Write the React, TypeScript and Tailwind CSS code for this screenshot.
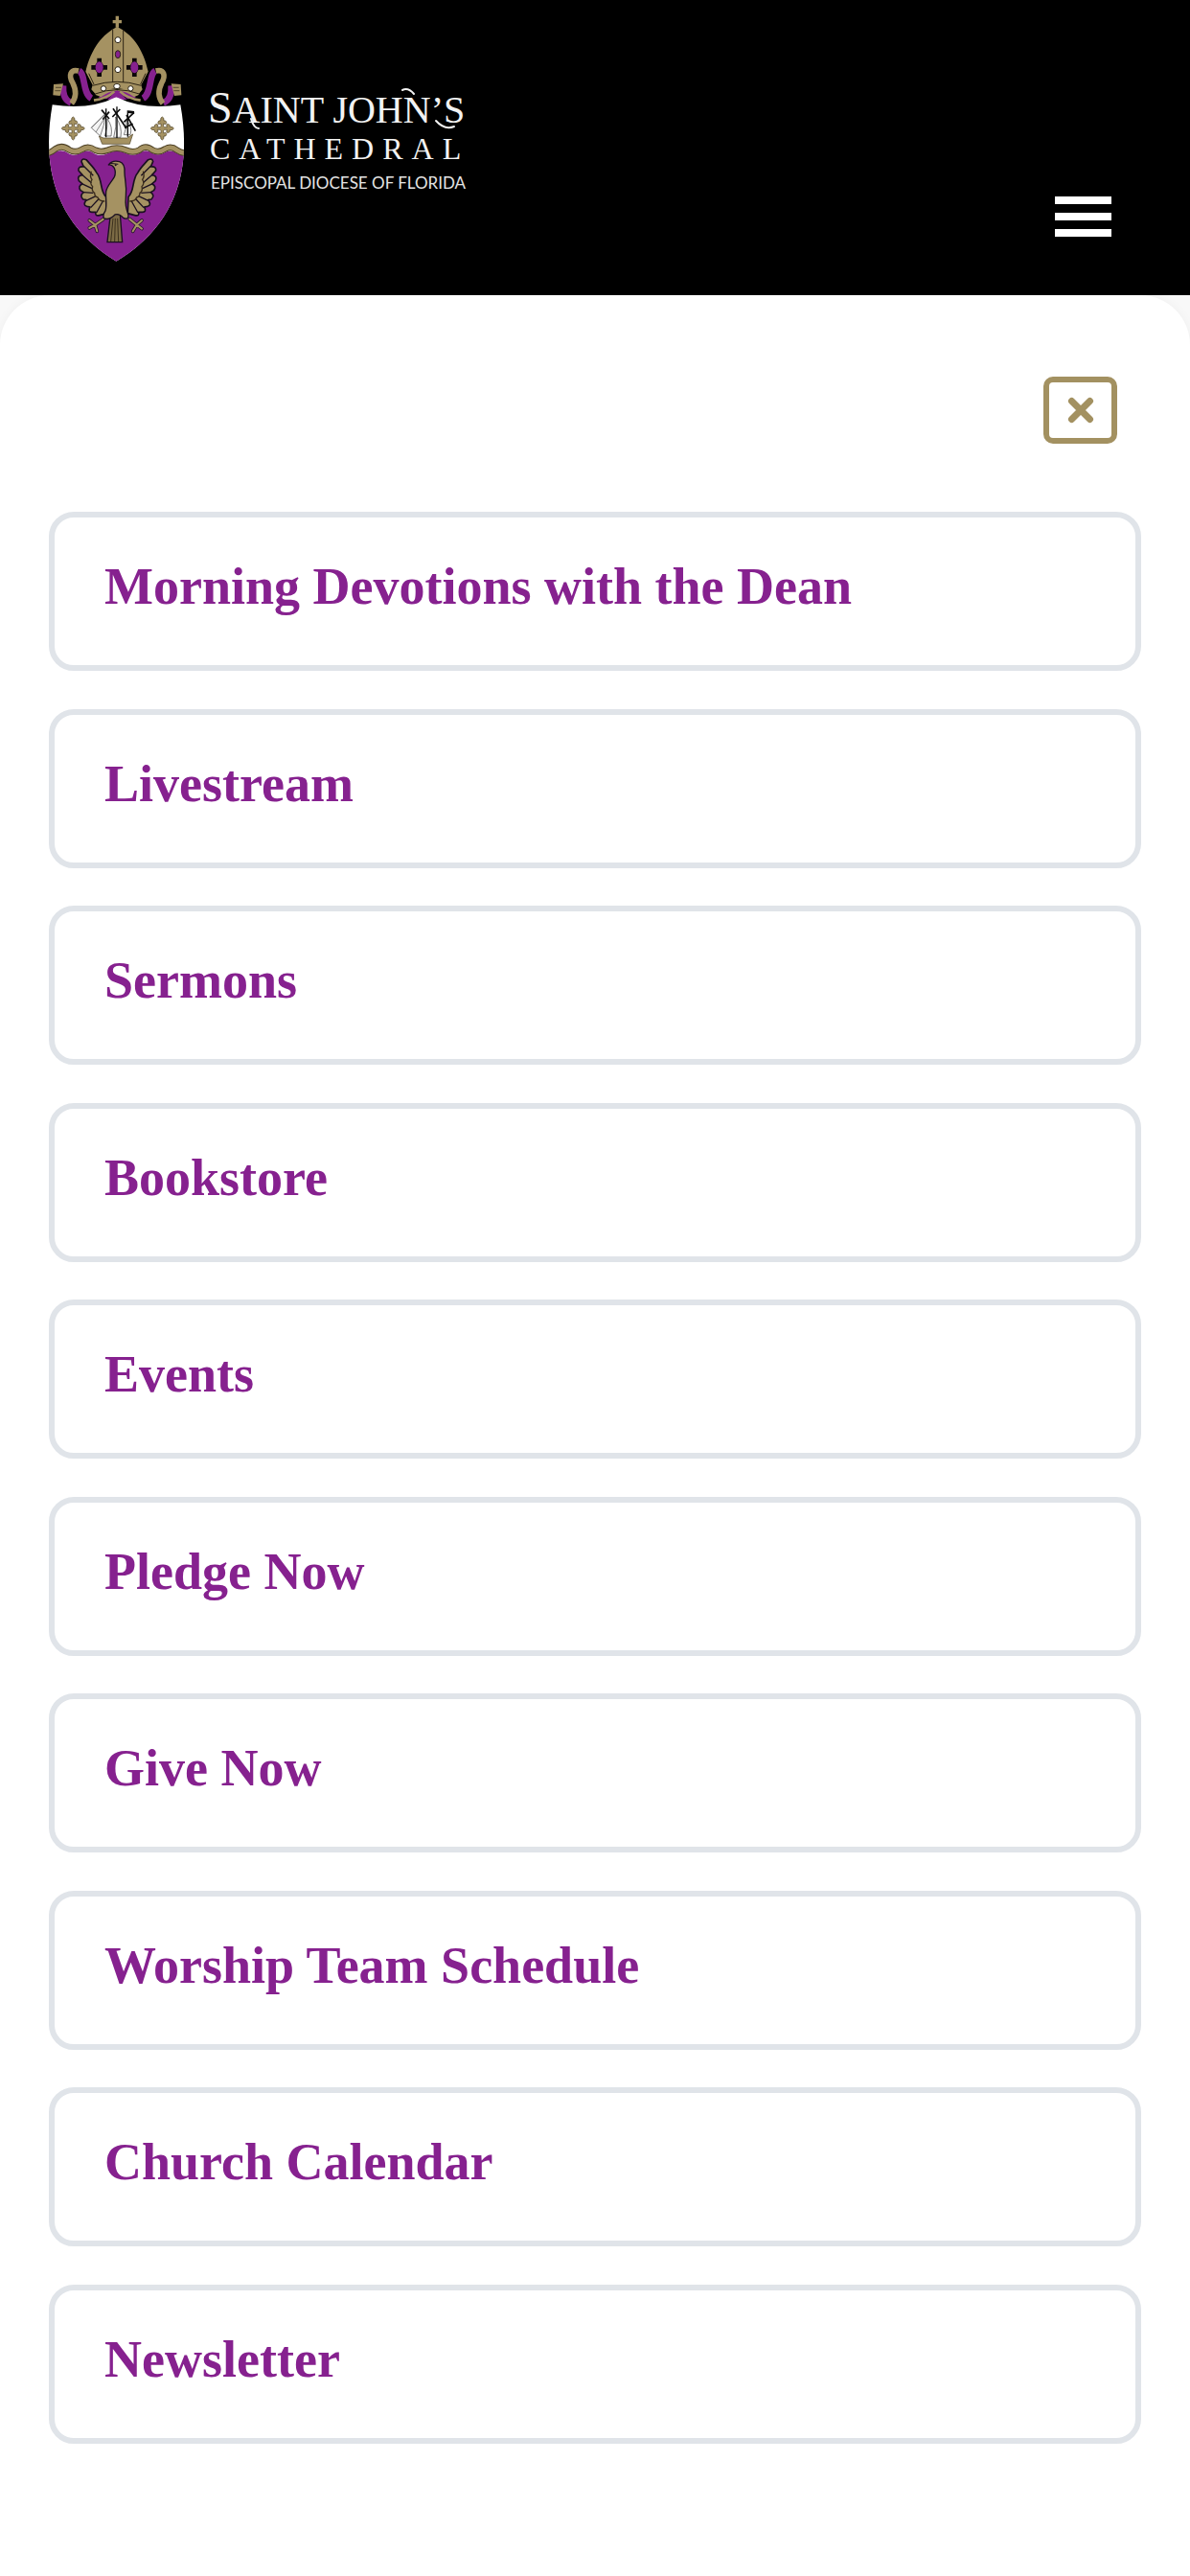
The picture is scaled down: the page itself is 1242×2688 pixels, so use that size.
import { useState } from 'react';

interface MenuLink {
  label: string;
  href: string;
}

const menuLinks: MenuLink[] = [
  { label: 'Morning Devotions with the Dean', href: '#devotions' },
  { label: 'Livestream', href: '#livestream' },
  { label: 'Sermons', href: '#sermons' },
  { label: 'Bookstore', href: '#bookstore' },
  { label: 'Events', href: '#events' },
  { label: 'Pledge Now', href: '#pledge' },
  { label: 'Give Now', href: '#give' },
  { label: 'Worship Team Schedule', href: '#worship-team' },
  { label: 'Church Calendar', href: '#calendar' },
  { label: 'Newsletter', href: '#newsletter' },
];

const GOLD = '#a59262';
const PURPLE = '#86218f';

function Mitre() {
  return (
    <g>
      {/* ribbons */}
      <g fill="none" strokeLinecap="butt" strokeLinejoin="round">
        <path d="M158 222 C178 232 168 292 196 308" stroke={PURPLE} strokeWidth="20" />
        <path d="M396 222 C376 232 386 292 358 308" stroke={PURPLE} strokeWidth="20" />
        <path d="M108 268 C106 300 116 316 132 322" stroke={PURPLE} strokeWidth="20" />
        <path d="M446 268 C448 300 438 316 422 322" stroke={PURPLE} strokeWidth="20" />
        <path d="M156 222 C130 216 124 236 138 260 C150 284 150 304 134 324" stroke={GOLD} strokeWidth="17" />
        <path d="M398 222 C424 216 430 236 416 260 C404 284 404 304 420 324" stroke={GOLD} strokeWidth="17" />
      </g>
      <path d="M78 264 L108 262 L98 300 L76 298 Z" fill={GOLD} />
      <path d="M476 264 L446 262 L456 300 L478 298 Z" fill={GOLD} />
      <path d="M84 274 H102 M82 284 H100 M470 274 H452 M472 284 H454" stroke="#2d2414" strokeWidth="2" />

      {/* cap */}
      <path
        d="M277 84 C232 106 196 150 178 224 L200 266 L196 280 L212 298 C256 270 298 270 342 298 L356 280 L352 266 L374 224 C358 150 322 106 277 84 Z"
        fill={GOLD}
      />
      <path d="M218 306 Q246 280 277 282 Q308 280 336 306 L310 310 Q290 294 277 292 Q264 294 244 310 Z" fill={PURPLE} />
      <path d="M208 296 Q250 268 277 282 Q304 268 346 296 L330 304 Q306 284 277 284 Q250 284 226 304 Z" fill={GOLD} />
      <path d="M277 282 L308 312 H246 Z" fill={PURPLE} />
      <path d="M204 314 Q246 308 268 286 M350 314 Q308 308 286 286" stroke={GOLD} strokeWidth="8" fill="none" />
      <g fill="none" stroke="#2d2414" strokeWidth="3">
        <path d="M263 92 V258 M296 94 V258" />
        <path d="M200 268 Q277 244 352 268" />
        <path d="M208 294 Q277 268 346 294" />
        <path d="M188 230 L204 264 M366 230 L350 264" />
      </g>
      <path d="M272 50 H282 V63 H291 V73 H282 V86 H272 V73 H263 V63 H272 Z" fill={GOLD} />

      {/* jewels */}
      <g stroke="#2d2414" strokeWidth="3">
        <circle cx="279" cy="125" r="9" fill="#fff" />
        <circle cx="279" cy="218" r="9" fill="#fff" />
        <ellipse cx="279" cy="170" rx="8" ry="12" fill={PURPLE} />
        <ellipse cx="276" cy="270" rx="10" ry="8" fill="#fff" />
        <circle cx="234" cy="277" r="8" fill="#fff" />
        <circle cx="319" cy="277" r="8" fill="#fff" />
      </g>
      <g fill="#0b0608">
        <path d="M214 182 H228 V194 L234 204 H246 V218 H234 L228 228 V240 H214 V228 L208 218 H196 V204 H208 L214 194 Z" />
        <path d="M324 182 H338 V194 L344 204 H356 V218 H344 L338 228 V240 H324 V228 L318 218 H306 V204 H318 L324 194 Z" />
      </g>
      <ellipse cx="221" cy="211" rx="12" ry="18" fill={PURPLE} />
      <ellipse cx="331" cy="211" rx="12" ry="18" fill={PURPLE} />
    </g>
  );
}

function BudCross({ x }: { x: number }) {
  return (
    <g transform={`translate(${x} 402)`} fill={GOLD} stroke="#4b3f24" strokeWidth="2">
      {[0, 90, 180, 270].map((angle) => (
        <path
          key={angle}
          transform={`rotate(${angle})`}
          d="M-4 0 L-4 -15 Q-15 -10 -13 -20 Q-11 -26 -5 -24 Q-6 -35 0 -36 Q6 -35 5 -24 Q11 -26 13 -20 Q15 -10 4 -15 L4 0 Z"
        />
      ))}
      <circle r="7" stroke="none" />
    </g>
  );
}

function Ship() {
  return (
    <g strokeLinejoin="round">
      <path d="M220 426 L234 432 H308 L326 420 L316 451 H230 Z" fill={GOLD} stroke="#4b3f24" strokeWidth="2" />
      <g fill="#f4f4f4" stroke="#444" strokeWidth="2">
        <path d="M240 356 L196 400 L224 426 Q238 392 240 356 Z" />
        <path d="M246 372 Q264 396 258 426 H238 Q248 398 246 372 Z" />
        <path d="M272 366 Q294 396 288 430 H266 Q276 396 272 366 Z" />
        <path d="M306 376 Q326 396 318 422 H298 Q308 396 306 376 Z" />
      </g>
      <g fill="none" stroke="#0c0c0c" strokeWidth="5">
        <path d="M242 340 V430 M276 334 V432 M310 346 V428" strokeWidth="4" />
        <path d="M228 344 L252 372 M232 374 L252 350 M264 340 L306 402 M262 366 L286 342 M298 382 L330 352 M306 360 L334 410 M300 400 L326 388" />
        <path d="M312 350 L330 352" strokeWidth="8" />
      </g>
      <path d="M196 400 L240 356 M210 414 L240 366" stroke="#555" strokeWidth="2" />
    </g>
  );
}

// One wing of the eagle; the other side is the same shape mirrored
function Wing() {
  return (
    <g>
      <path
        d="M242 616 C222 600 232 562 212 540 C204 524 192 514 180 500 Q166 494 165 506 L172 522 Q154 520 156 534 L168 548 Q150 550 157 566 L168 576 Q153 582 162 596 L172 602 Q158 612 170 624 L180 626 Q168 642 182 646 L192 648 Q184 664 198 664 L210 664 Q206 678 222 674 L244 668 Z"
        fill={GOLD}
        stroke="#1a1020"
        strokeWidth="5"
        strokeLinejoin="round"
      />
      <path
        d="M172 520 L202 550 M166 546 L196 572 M166 575 L198 590 M172 602 L202 604 M180 628 L210 614 M194 650 L220 622 M212 666 L232 630"
        stroke="#1a1020"
        strokeWidth="4"
        fill="none"
      />
      <path d="M196 536 Q190 552 198 562 Q190 574 200 584 Q196 598 206 604 Q206 616 216 618 Q220 630 238 630" stroke="#3a2c1c" strokeWidth="4" fill="none" />
    </g>
  );
}

function Eagle() {
  return (
    <g>
      <Wing />
      <g transform="matrix(-1 0 0 1 554 0)">
        <Wing />
      </g>
      {/* feet */}
      <g fill="none" stroke="#2a1630" strokeWidth="11" strokeLinecap="round">
        <path d="M234 686 L208 704 L190 690 M208 704 L190 714 M208 704 L214 724 M316 686 L338 704 L354 690 M338 704 L354 716 M338 704 L326 724" />
      </g>
      <g fill="none" stroke={GOLD} strokeWidth="6" strokeLinecap="round">
        <path d="M234 686 L208 704 L190 690 M208 704 L190 714 M208 704 L214 724 M316 686 L338 704 L354 690 M338 704 L354 716 M338 704 L326 724" />
      </g>
      {/* tail */}
      <path d="M256 670 L246 758 H293 L286 670 Z" fill="#7c6b45" stroke="#1a1020" strokeWidth="4" />
      <path d="M264 684 L257 756 M271 684 L269 756 M278 684 L281 756" stroke="#3a2f1c" strokeWidth="3" />
      {/* body */}
      <path
        d="M250 516 Q262 500 284 506 Q302 512 300 540 C300 560 308 580 304 616 C302 640 304 650 312 674 Q312 690 296 682 Q284 668 270 672 Q252 690 236 684 Q230 676 240 660 C246 640 240 624 242 600 C246 580 258 572 268 554 Q274 542 268 526 Q260 514 250 516 Z"
        fill={GOLD}
        stroke="#1a1020"
        strokeWidth="4"
        strokeLinejoin="round"
      />
      <path d="M254 511 L280 514" stroke="#1a1020" strokeWidth="3" />
      <circle cx="272" cy="517" r="3" fill="#1a1020" />
    </g>
  );
}

function CathedralLogo() {
  return (
    <svg viewBox="0 0 460 290" className="w-[460px] h-auto" role="img" aria-label="Saint John's Cathedral, Episcopal Diocese of Florida">
      <clipPath id="shield">
        <path d="M74 328 Q190 346 274 304 Q360 346 475 328 C510 520 470 700 274 818 C80 700 40 520 74 328 Z" />
      </clipPath>
      <g transform="scale(0.3333)">
        <Mitre />
        <g clipPath="url(#shield)">
          <rect x="40" y="290" width="470" height="540" fill="#fff" />
          <path
            d="M40 486 Q64 490 84 476 Q104 466 128 482 Q146 490 166 478 Q186 466 208 482 Q226 490 248 480 Q276 466 304 480 Q326 490 346 480 Q366 464 388 480 Q408 490 428 476 Q446 468 464 480 Q480 490 510 490 V830 H40 Z"
            fill={PURPLE}
          />
          <path
            d="M40 480 Q64 484 84 466 Q104 452 128 470 Q146 480 166 468 Q186 454 208 470 Q226 478 248 470 Q276 458 304 470 Q326 480 346 470 Q366 452 388 470 Q408 480 428 466 Q446 456 464 470 Q480 482 510 480"
            fill="none"
            stroke="#4b3f24"
            strokeWidth="20"
          />
          <path
            d="M40 480 Q64 484 84 466 Q104 452 128 470 Q146 480 166 468 Q186 454 208 470 Q226 478 248 470 Q276 458 304 470 Q326 480 346 470 Q366 452 388 470 Q408 480 428 466 Q446 456 464 470 Q480 482 510 480"
            fill="none"
            stroke={GOLD}
            strokeWidth="14"
          />
        </g>
        <BudCross x={139} />
        <BudCross x={418} />
        <Ship />
        <Eagle />
      </g>

      <g fill="#f2f2f2" className="font-['Liberation_Serif',serif]">
        <text x="187" y="128" fontSize="40">
          <tspan fontSize="46">S</tspan>AINT JOHN’S
        </text>
        <text x="189" y="166" fontSize="32" className="tracking-[9px]">
          CATHEDRAL
        </text>
      </g>
      {/* flourishes on the A and the N */}
      <g fill="none" stroke="#f2f2f2" strokeWidth="2" strokeLinecap="round">
        <path d="M232 124 Q235 134 240 134" />
        <path d="M390 94 Q396 91 402 98" />
        <path d="M425 126 Q434 136 444 132" />
      </g>
      <text x="190" y="197" fontSize="17" fill="#e4e4e4" className="font-['Lato',sans-serif]">
        EPISCOPAL DIOCESE OF FLORIDA
      </text>
    </svg>
  );
}

interface HeaderProps {
  onToggle: () => void;
}

function Header({ onToggle }: HeaderProps) {
  return (
    <header className="bg-black flex justify-between items-start pl-[30px] pr-[82px] pb-[18px]">
      <a href="#home">
        <CathedralLogo />
      </a>
      <button onClick={onToggle} aria-label="Menu" className="mt-[205px] w-[59px] flex flex-col gap-[9px] cursor-pointer">
        <span className="h-2 w-full bg-white" />
        <span className="h-2 w-full bg-white" />
        <span className="h-2 w-full bg-white" />
      </button>
    </header>
  );
}

export default function App() {
  const [isOpen, setIsOpen] = useState(true);

  return (
    <div className="min-h-screen flex flex-col bg-[#f8f8f8]">
      <Header onToggle={() => setIsOpen(!isOpen)} />

      {isOpen && (
        <main className="flex-1 flex flex-col bg-white rounded-t-[52px] shadow-[0_0_12px_rgba(0,0,0,0.04)] px-[51px] pt-[85px] pb-[138px]">
          <button
            onClick={() => setIsOpen(false)}
            aria-label="Close menu"
            className="self-end mr-[25px] w-[77px] h-[70px] flex items-center justify-center border-[6px] border-[#a39161] rounded-[10px] cursor-pointer"
          >
            <svg viewBox="0 0 28 28" className="w-7 h-7" fill="none" stroke="#a39161" strokeWidth="7" strokeLinecap="round">
              <path d="M4.5 4.5 L23.5 23.5 M23.5 4.5 L4.5 23.5" />
            </svg>
          </button>

          <nav className="flex-1 flex flex-col mt-[71px]">
            <ul className="flex-1 flex flex-col justify-between gap-9">
              {menuLinks.map((link) => (
                <li key={link.href}>
                  <a
                    href={link.href}
                    className="block border-[6px] border-[#e0e4e9] rounded-[26px] pl-[52px] pr-6 pt-[45px] pb-[55px] font-['Liberation_Serif',serif] font-bold text-[54px] leading-[54px] text-[#86218f]"
                  >
                    {link.label}
                  </a>
                </li>
              ))}
            </ul>
          </nav>
        </main>
      )}
    </div>
  );
}
